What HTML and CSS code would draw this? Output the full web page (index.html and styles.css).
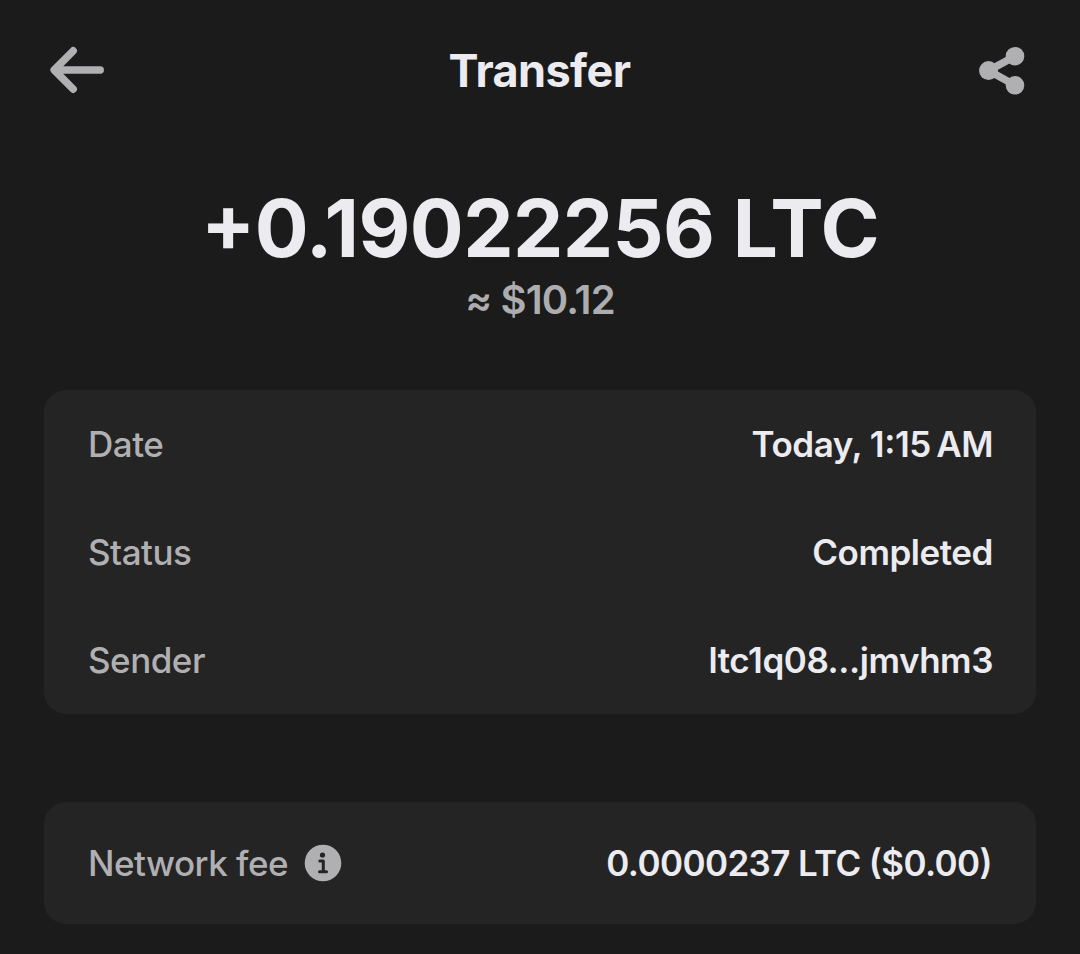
FILE: index.html
```html
<!DOCTYPE html>
<html lang="en">
<head>
<meta charset="utf-8">
<title>Transfer</title>
<link rel="stylesheet" href="styles.css">
</head>
<body>
<header class="topbar">
<svg class="back" viewBox="0 0 60 52" width="60" height="52"><path d="M54.200 26H9M27.200 6.800L8.200 26L27.200 45.200"/></svg>
<h1 class="title">Transfer</h1>
<svg class="share" viewBox="0 0 46 50" width="46" height="50"><path d="M36 11.300L9.500 25.600L36 40.200"/><circle cx="36" cy="11.200" r="9.300"/><circle cx="9.500" cy="25.600" r="9.500"/><circle cx="36" cy="40.300" r="9.300"/></svg>
</header>
<main>
<section class="summary">
<div class="amount">+0.19022256 LTC</div>
<div class="fiat">≈ $10.12</div>
</section>
<section class="card">
<div class="row"><span class="label">Date</span><span class="value date">Today, 1:15&#8239;AM</span></div>
<div class="row"><span class="label">Status</span><span class="value status">Completed</span></div>
<div class="row"><span class="label">Sender</span><span class="value sender">ltc1q08...jmvhm3</span></div>
</section>
<section class="card fee">
<div class="row"><span class="label">Network fee</span><svg class="info" viewBox="0 0 38 38" width="38" height="38"><circle cx="19" cy="19" r="18.300"/><path d="M15.800 17H19.300V27.500M15.500 27.700H22.500"/><circle class="dot" cx="18.500" cy="11" r="2.600"/></svg><span class="value cost">0.0000237 LTC ($0.00)</span></div>
</section>
</main>
</body>
</html>
```
FILE: styles.css
```css
* { box-sizing: border-box; }
body { margin: 0; height: 954px; overflow: hidden; background: #1b1b1b; font-family: Inter, "Liberation Sans", sans-serif; color: #ebebf0; }
.topbar { height: 140px; padding: 0 55px 0 46px; display: grid; grid-template-columns: 1fr auto 1fr; align-items: center; }
.title { margin: 1px -8px 0 0; font-size: 45px; line-height: 56px; font-weight: 700; letter-spacing: -0.6px; }
.back { fill: none; stroke: #b0b0b2; stroke-width: 7.500; stroke-linecap: round; stroke-linejoin: round; }
.share { justify-self: end; fill: #b0b0b2; }
.share path { fill: none; stroke: #b0b0b2; stroke-width: 7.500; }
.summary { height: 250px; padding-top: 40px; text-align: center; white-space: nowrap; }
.amount { font-size: 80px; line-height: 96px; font-weight: 700; letter-spacing: -0.600px; font-feature-settings: "calt" 1; }
.fiat { font-size: 40px; line-height: 48px; font-weight: 600; letter-spacing: -0.850px; color: #adadaf; }
.card { margin: 0 44px; background: #242424; border-radius: 22px; }
.row { height: 108px; padding: 0 43px 0 44px; display: flex; align-items: center; font-size: 35px; line-height: 44px; white-space: nowrap; letter-spacing: -0.450px; font-feature-settings: "calt" 1; }
.label { color: #b0b0b2; font-weight: 450; letter-spacing: -0.500px; }
.value { margin-left: auto; font-weight: 600; }
.fee { margin-top: 88px; }
.fee .row { height: 122px; }
.info { margin: 0 0 0 16px; fill: #b0b0b2; }
.info path { fill: none; stroke: #242424; stroke-width: 3; stroke-linecap: round; stroke-linejoin: round; }
.info .dot { fill: #242424; }
.cost { margin-right: 1px; letter-spacing: -0.600px; }
```
